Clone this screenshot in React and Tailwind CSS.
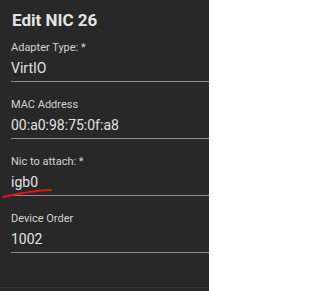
import React from "react";

const FIELDS = [
  { label: "Adapter Type: *", value: "VirtIO" },
  { label: "MAC Address", value: "00:a0:98:75:0f:a8" },
  { label: "Nic to attach: *", value: "igb0", marked: true },
  { label: "Device Order", value: "1002" },
];

export default function App() {
  return (
    <div
      className="relative w-[209px] h-[291px] bg-[#282828] overflow-hidden"
      style={{ fontFamily: "Roboto, 'Liberation Sans', sans-serif" }}
    >
      <div className="h-[288px] border-b border-[#313131] pl-[11px]">
        <h1 className="pt-[10px] pl-[1px] text-[17px] leading-[21px] font-bold text-[#e4e4e4]">
          Edit NIC 26
        </h1>
        <div className="mt-[10px] flex flex-col gap-[16px]">
          {FIELDS.map((f) => (
            <div key={f.label} className="border-b border-[#8a8a8a] pb-[3px]">
              <div className="text-[11px] leading-[13px] text-[#d2d2d2]">{f.label}</div>
              <div className="mt-[4px] text-[14px] leading-[20px] text-[#e2e2e2]">{f.value}</div>
            </div>
          ))}
        </div>
      </div>
      <svg className="absolute left-0 top-[186px]" width="60" height="14" viewBox="0 186 60 14">
        <path
          d="M3 197 C 14 195 24 191 51 190"
          fill="none"
          stroke="#e01414"
          strokeWidth="2"
          strokeLinecap="round"
        />
      </svg>
    </div>
  );
}
